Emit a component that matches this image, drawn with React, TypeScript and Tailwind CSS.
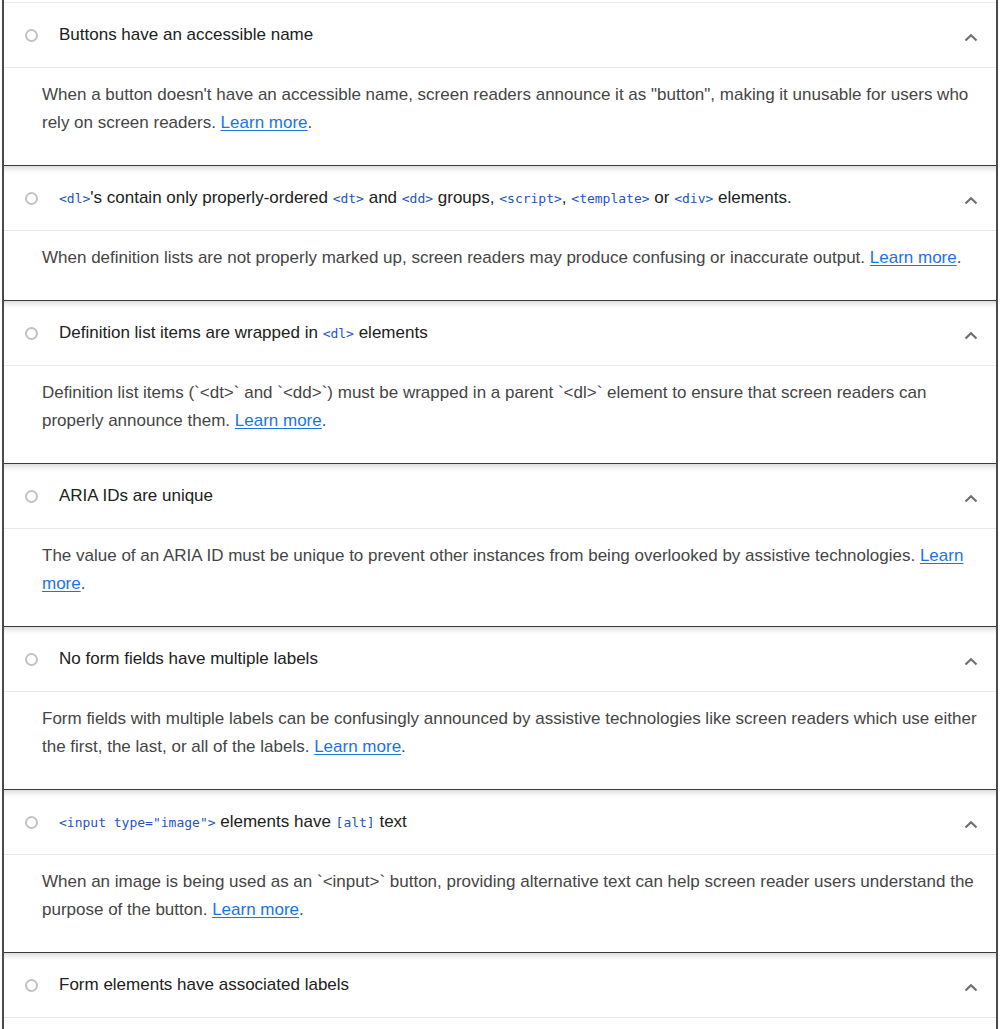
import React from "react";

type Part = string | { code: string };

type Audit = {
  title: Part[];
  body: string;
};

const audits: Audit[] = [
  {
    title: ["Buttons have an accessible name"],
    body: 'When a button doesn\'t have an accessible name, screen readers announce it as "button", making it unusable for users who rely on screen readers.',
  },
  {
    title: [
      { code: "<dl>" },
      "'s contain only properly-ordered ",
      { code: "<dt>" },
      " and ",
      { code: "<dd>" },
      " groups, ",
      { code: "<script>" },
      ", ",
      { code: "<template>" },
      " or ",
      { code: "<div>" },
      " elements.",
    ],
    body: "When definition lists are not properly marked up, screen readers may produce confusing or inaccurate output.",
  },
  {
    title: ["Definition list items are wrapped in ", { code: "<dl>" }, " elements"],
    body: "Definition list items (`<dt>` and `<dd>`) must be wrapped in a parent `<dl>` element to ensure that screen readers can properly announce them.",
  },
  {
    title: ["ARIA IDs are unique"],
    body: "The value of an ARIA ID must be unique to prevent other instances from being overlooked by assistive technologies.",
  },
  {
    title: ["No form fields have multiple labels"],
    body: "Form fields with multiple labels can be confusingly announced by assistive technologies like screen readers which use either the first, the last, or all of the labels.",
  },
  {
    title: [{ code: '<input type="image">' }, " elements have ", { code: "[alt]" }, " text"],
    body: "When an image is being used as an `<input>` button, providing alternative text can help screen reader users understand the purpose of the button.",
  },
  {
    title: ["Form elements have associated labels"],
    body: "",
  },
];

function Chevron() {
  return (
    <svg width="14" height="9" viewBox="0 0 14 9" className="shrink-0">
      <polyline points="1.5,7.5 7,2.2 12.5,7.5" fill="none" stroke="#6f6f6f" strokeWidth="2.2" />
    </svg>
  );
}

function Title({ parts }: { parts: Part[] }) {
  return (
    <span>
      {parts.map((p, i) =>
        typeof p === "string" ? (
          <span key={i}>{p}</span>
        ) : (
          <code
            key={i}
            className="text-[13px] text-[#2255c4]"
            style={{ fontFamily: '"DejaVu Sans Mono", "Liberation Mono", monospace' }}
          >
            {p.code}
          </code>
        ),
      )}
    </span>
  );
}

function AuditItem({ audit, first }: { audit: Audit; first: boolean }) {
  return (
    <div className={first ? "border-t border-[#ececec]" : ""}>
      <div
        className={`flex h-16 items-center pl-[21px] pr-[18px] text-[17px] text-[#212121] ${
          first ? "" : "shadow-[inset_0_7px_6px_-5px_rgba(0,0,0,0.18)]"
        }`}
      >
        <span className="h-[13px] w-[13px] shrink-0 rounded-full border-[2.5px] border-[#c2c2c2]" />
        <div className="ml-[21px] flex-1">
          <Title parts={audit.title} />
        </div>
        <div className="pt-1">
          <Chevron />
        </div>
      </div>
      <div className="h-px bg-[#e9e9e9]" />
      {audit.body && (
        <div className="border-b border-[#3a3a3a] pb-[28px] pl-[38px] pr-3 pt-[13px] text-[17px] leading-7 text-[#454545]">
          {audit.body}{" "}
          <a href="#" className="text-[#1a73e8] underline underline-offset-2">
            Learn more
          </a>
          .
        </div>
      )}
    </div>
  );
}

export default function App() {
  return (
    <div
      className="h-[1029px] overflow-hidden bg-white"
      style={{ fontFamily: '"Liberation Sans", Arial, sans-serif' }}
    >
      <div className="ml-[2px] h-full w-[996px] border-x-2 border-[#4a4a4a] pt-[2px]">
        {audits.map((a, i) => (
          <AuditItem key={i} audit={a} first={i === 0} />
        ))}
      </div>
    </div>
  );
}
